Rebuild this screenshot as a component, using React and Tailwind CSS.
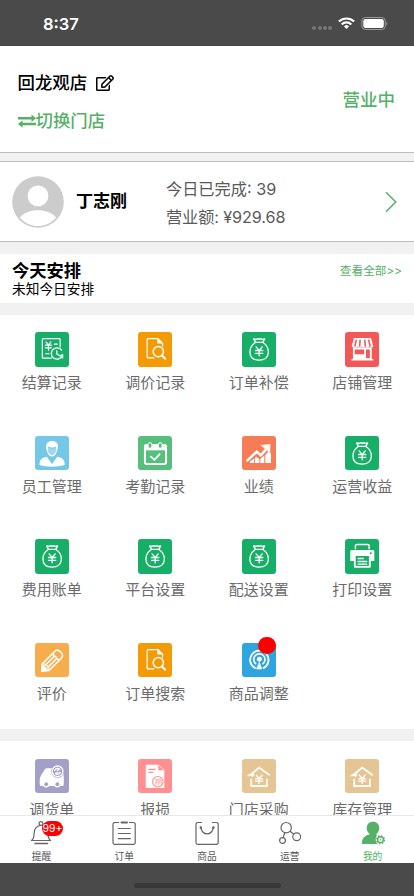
import React from 'react';
import clsx from 'clsx';
import { FaRegEdit } from 'react-icons/fa';

/* ---------- Tile icons, drawn on a 34.5 unit board ---------- */

const Board = ({ children }) => (
  <svg viewBox="0 0 34.5 34.5" className="block h-full w-full" fill="none" stroke="#fff" strokeWidth="1.2" strokeLinecap="round" strokeLinejoin="round">
    {children}
  </svg>
);

const SettleIcon = () => (
  <Board>
    <path d="M16.500 26.2H8.400a1 1 0 0 1-1-1V7.500a1 1 0 0 1 1-1h16a1 1 0 0 1 1 1V15" />
    <path d="M11 9.800l2.600 3 2.600-3M10.500 13h6.200M10.500 15.800h6.200M13.600 13v5.200M19.500 12h3M11 21.700h3" />
    <path d="M26.800 18.200a5.700 5.700 0 1 0 .7 5.500M22 18.800v3.200l2.600 1.600" strokeWidth="1.300" />
    <path d="M24.800 23.500l3.500-1.300-.2 4.200z" fill="#fff" strokeWidth=".5" />
  </Board>
);

const FileSearchIcon = () => (
  <Board>
    <path d="M16 26H10.200a1 1 0 0 1-1-1V7.800a1.300 1.300 0 0 1 1.300-1.300h9.700l4.600 4.500V14" />
    <path d="M19.800 6.800v4.400h4.700z" fill="#fff" strokeWidth=".5" />
    <circle cx="20.500" cy="19.600" r="5.200" strokeWidth="1.500" />
    <path d="M24.200 23.500l3.300 3.300" strokeWidth="2" />
  </Board>
);

const MoneyBagIcon = () => (
  <Board>
    <path d="M13.500 10.400c-3.200 2-5.500 5.800-5.500 9.700 0 5.300 3.700 8.100 9.300 8.100s9.300-2.800 9.300-8.100c0-3.900-2.300-7.700-5.500-9.700z" strokeWidth="1.300" />
    <path d="M13.500 10.200L11.800 6.800l2.800.5 1.300-.7 1.400.7 1.400-.7 1.300.7 2.800-.5-1.700 3.400" strokeWidth="1.500" />
    <path d="M14.200 14.800l3.100 3.600 3.100-3.600M13.600 18.500h7.400M13.600 21.400h7.400M17.300 18.500v5.300" strokeWidth="1.300" />
  </Board>
);

const ShopIcon = () => (
  <Board>
    <path d="M9 6h17.200l2.300 8.200c-.3 1.700-3 1.900-3.700.4-.8 1.500-3.500 1.500-4 0-.8 1.500-3.400 1.500-4 0-.8 1.500-3.500 1.500-4 0-.7 1.500-5 1.500-6-.4z" fill="#fff" stroke="none" />
    <path d="M11.300 8.300L10 14M15.200 8.300L14.800 14M20 8.300l.4 5.700M24 8.300l1.300 5.700" stroke="#f45757" strokeWidth="1.600" />
    <path d="M8 15.500h19v12H8zM6.500 27h22v1.700h-22z" fill="#fff" stroke="none" />
    <path d="M9.800 17.500h9.500v4.800H9.800zM21.200 17.500h3.900v8.500h-3.900z" fill="#f45757" stroke="none" />
  </Board>
);

const StaffIcon = () => (
  <Board>
    <path d="M11.300 12.200C10.500 7 13.500 4.700 17.400 4.800c4.700.1 6.300 3 5.600 7.400-.2 1.500-.6 2.500-1.200 3.800-1.500 6-7.700 6-9.200.5-.7-1.500-1.100-2.500-1.300-4.300z" fill="#fff" stroke="none" />
    <path d="M13.300 11c2.500 1.300 5.300 1.300 7.600.2l.7 1.500c-.2 3-1.700 6.300-4.300 6.300s-3.800-2.600-4.300-4.800z" fill="#9ed8ef" stroke="none" />
    <path d="M13.300 11.200c2.500 1 5.300 1.400 7.600 0" stroke="#74c7e7" strokeWidth="1" />
    <path d="M12 20.700l5.200 7.400 5.200-7.400 3.900 1.200c2.700 1.300 3.700 3.600 3.700 7.200-7.500 2.200-18 2.200-25.500 0 0-3.600 1-5.900 3.700-7.200z" fill="#fff" stroke="none" />
    <path d="M17.200 21.500l-1.500 2 1.500 3 1.500-3z" fill="#74c7e7" stroke="none" />
  </Board>
);

const CalendarIcon = () => (
  <Board>
    <path d="M7 10.300a1.500 1.500 0 0 1 1.500-1.500h18.300a1.500 1.500 0 0 1 1.500 1.500v16.200a1.500 1.500 0 0 1-1.500 1.500H8.500A1.500 1.500 0 0 1 7 26.500z" strokeWidth="2" />
    <path d="M7 9h21.300v5.300H7z" fill="#fff" stroke="none" />
    <rect x="10.200" y="6.500" width="3.800" height="5.700" rx="1.900" fill="#57bf7c" strokeWidth="1" />
    <rect x="20.500" y="6.500" width="3.800" height="5.700" rx="1.900" fill="#57bf7c" strokeWidth="1" />
    <path d="M13 20.700l3.600 3.300 5.300-5.800" strokeWidth="1.800" />
  </Board>
);

const ChartIcon = () => (
  <Board>
    <path d="M8 27v-1.300l4.200-3.200v4.500zM13 27v-5l1.500-1.200 3 2.500V27zM18.500 27v-4l4-3.500V27zM23.500 27v-8l3.300-3.500 2.400 2V27z" fill="#fff" stroke="none" />
    <path d="M5.500 24.500l9.300-8.800 4.200 3.600 6-6.700" strokeWidth="2.600" strokeLinejoin="miter" />
    <path d="M19.300 9.200l9.100-1-.3 8.300z" fill="#fff" strokeWidth=".5" />
  </Board>
);

const PrinterIcon = () => (
  <Board>
    <path d="M10.500 9.700V6.800a1.300 1.300 0 0 1 1.300-1.300h11.300a1.300 1.300 0 0 1 1.300 1.300v2.900" strokeWidth="1.500" />
    <path d="M6.800 11h21.300a1.500 1.500 0 0 1 1.500 1.500v9.500H26v5.800a1 1 0 0 1-1 1H10a1 1 0 0 1-1-1V22H5.300v-9.500A1.500 1.500 0 0 1 6.800 11z" fill="#fff" stroke="none" />
    <path d="M10.800 17h13.300v10H10.800z" fill="#17ae67" stroke="none" />
    <circle cx="26" cy="14.200" r="1.100" fill="#17ae67" stroke="none" />
    <path d="M13.300 19.500h5M13.300 22.500h8.500M13.300 25.200h8.500" strokeWidth="1.500" />
  </Board>
);

const PencilIcon = () => (
  <Board>
    <g transform="translate(6.500 28.500) rotate(-45)">
      <path d="M.3 0L6-4.800h17.500a4 4 0 0 1 4 4v1.600a4 4 0 0 1-4 4H6z" strokeWidth="1.600" />
      <path d="M.3 0L5.500-3.200v6.400z" fill="#fff" strokeWidth="1" />
      <path d="M8.500-1.600h11.500M8.500 1.700h11.500M20.500-4.500v9" strokeWidth="1.500" />
      <path d="M6-4.200c2 1 2 2 1 2.700 1.500.8 1.500 2 0 3 1 .8 1 1.800-1 2.800" />
    </g>
  </Board>
);

const AntennaIcon = () => (
  <Board>
    <path d="M13 25a9.300 9.300 0 1 1 9 0" strokeWidth="1.900" />
    <path d="M13.700 20.700a5.700 5.700 0 1 1 7.600 0" strokeWidth="1.700" />
    <circle cx="17.500" cy="16.300" r="2.500" fill="#fff" stroke="none" />
    <path d="M17.500 19.500l2.600 6.500h-5.200z" fill="#fff" strokeWidth=".6" />
  </Board>
);

const TruckIcon = () => (
  <Board>
    <path d="M5.500 27c-1-1-.8-3-.8-5.500 0-3.500 1.800-6 4.500-10 .8-1.500 1.500-2.200 3-2.200h13l3.500 5.500c.5 3.500.5 7.500.3 10.700 0 1-.5 1.500-1.500 1.500z" fill="#fff" stroke="none" />
    <circle cx="11.300" cy="25.500" r="3" fill="#fff" stroke="none" />
    <circle cx="22.500" cy="25.500" r="3" fill="#fff" stroke="none" />
    <circle cx="11.300" cy="25.200" r="1.900" fill="#a2a0c8" stroke="none" />
    <circle cx="22.500" cy="25.200" r="1.900" fill="#a2a0c8" stroke="none" />
    <circle cx="22.800" cy="12.300" r="6.500" fill="#a2a0c8" stroke="none" />
    <circle cx="22.800" cy="12.300" r="5.400" fill="#a2a0c8" strokeWidth="1.300" />
    <path d="M20 11.300c.8-2.200 3.400-2.700 5-1l-2.700 1M25.600 13.300c-.8 2.200-3.400 2.700-5 1l2.700-1" strokeWidth="1.300" />
  </Board>
);

const LossIcon = () => (
  <Board>
    <path d="M8.700 5.700H21l5.500 5.500v18H8.700a.9.900 0 0 1-.9-.9V6.600a.9.900 0 0 1 .9-.9z" fill="#fff" stroke="none" />
    <path d="M20.500 6v5.300H26z" fill="#ff8f90" stroke="none" />
    <path d="M11 10.300h6.500M11 13.300h4" stroke="#ff8f90" strokeWidth="1.100" />
    <circle cx="20" cy="22.800" r="5.300" fill="#fff" stroke="#ff8f90" strokeWidth="1.100" />
    <path d="M17.200 21h2.500M18.500 19.800v5.600l-.9-.4M17.200 23.500l2.500-.8M20.800 20h2.500v1.500h-2.500zM20.600 25.300v-2.500h2.900v2.500M22 23.500l-1.500 2" stroke="#ff8f90" strokeWidth=".6" />
  </Board>
);

const DepotIcon = () => (
  <Board>
    <path d="M9.800 14.800l7.500-6.300 10.700 7.700" strokeWidth="1.800" strokeLinecap="butt" strokeLinejoin="miter" />
    <path d="M9.300 19.800v7.400h15.800v-7.400" strokeWidth="1.700" strokeLinecap="butt" strokeLinejoin="miter" />
    <path d="M5.800 16.700c1-1.600 2.300-2 4.500-2v-1.500l2 2.600-2 2.400v-1.500z" fill="#fff" strokeWidth=".6" />
    <path d="M14.400 16.200l2.900 3.300 2.900-3.300M13.700 19.800h7.200M13.700 22.200h7.200M17.300 19.800v4.800" strokeWidth="1.300" />
  </Board>
);

/* ---------- Tab bar icons, 24 unit board ---------- */

const TabSvg = ({ children }) => (
  <svg viewBox="0 0 24 24" className="block h-6 w-6" fill="none" stroke="#666" strokeWidth="1.200" strokeLinecap="round" strokeLinejoin="round">
    {children}
  </svg>
);

const BellIcon = () => (
  <TabSvg>
    <circle cx="12" cy="2.500" r="1.900" />
    <path d="M2.500 19.500c2.200-1.800 2.600-4 2.600-7.300C5.100 7.500 8 4.500 12 4.500s6.900 3 6.900 7.700c0 3.300.5 5.500 2.700 7.300z" />
    <path d="M6 22.500h12.500" strokeWidth="1.500" />
  </TabSvg>
);

const OrderIcon = () => (
  <TabSvg>
    <path d="M6.700 1.500H2.800A1.800 1.800 0 0 0 1 3.300v18.300a1.800 1.800 0 0 0 1.800 1.800h18.600a1.800 1.800 0 0 0 1.800-1.800V3.300a1.800 1.800 0 0 0-1.800-1.800h-3.900" />
    <path d="M9.500 1.500h5.500" strokeWidth="2" />
    <path d="M6.300 7.500h12M6.300 12.500h12M6.300 17.700h12" />
  </TabSvg>
);

const GoodsIcon = () => (
  <TabSvg>
    <path d="M6.500 1.500H2.800A1.800 1.800 0 0 0 1 3.300v18.200a1.800 1.800 0 0 0 1.800 1.800h18.600a1.800 1.800 0 0 0 1.800-1.800V3.300a1.800 1.800 0 0 0-1.800-1.800h-3.900" />
    <path d="M5.800 6.500c1 4.300 3.500 6.400 6.300 6.400s5.300-2.100 6.300-6.400" />
    <path d="M5.800 6.500v.1M18.400 6.500v.1" strokeWidth="2.600" />
  </TabSvg>
);

const OperateIcon = () => (
  <TabSvg>
    <circle cx="8.200" cy="6.700" r="5.200" />
    <circle cx="18.700" cy="15.700" r="3.900" />
    <circle cx="4.500" cy="19.500" r="2.900" />
    <path d="M12.100 10.300l3.700 2.900M6.700 11.800l-1.500 4.800" />
  </TabSvg>
);

const MineIcon = () => (
  <TabSvg>
    <path d="M12 .8c3.800 0 6.300 2.700 6.300 6.300 0 2.600-1.300 4.800-3 5.900l.5 1.700c-1.800 2.500-1.500 6 .8 8.300H.8c.2-5.500 2.200-8 7.500-9.500l.3-.6c-1.700-1.100-2.900-3.200-2.900-5.800C5.700 3.500 8.200.8 12 .8z" fill="#55b068" stroke="none" />
    <circle cx="19.500" cy="18.700" r="2.900" stroke="#55b068" strokeWidth="1.400" />
    <circle cx="19.500" cy="18.700" r="3.900" stroke="#55b068" strokeWidth="1.400" strokeDasharray="1.500 1.560" strokeLinecap="butt" />
    <circle cx="19.500" cy="18.700" r=".8" fill="#55b068" stroke="none" />
  </TabSvg>
);

const SwapIcon = () => (
  <svg viewBox="0 0 18 14" className="h-3.5 w-[18px] shrink-0" fill="#55b068">
    <path d="M0 3h13.500V.5L18 4.200l-4.500 3.700V5.400H0zM18 8.800H4.500V6.300L0 10l4.500 3.700v-2.500H18z" />
  </svg>
);

const SERVICES = [
  { label: '结算记录', color: 'bg-[#17ae67]', Icon: SettleIcon },
  { label: '调价记录', color: 'bg-[#f39b05]', Icon: FileSearchIcon },
  { label: '订单补偿', color: 'bg-[#17ae67]', Icon: MoneyBagIcon },
  { label: '店铺管理', color: 'bg-[#f45757]', Icon: ShopIcon },
  { label: '员工管理', color: 'bg-[#74c7e7]', Icon: StaffIcon },
  { label: '考勤记录', color: 'bg-[#57bf7c]', Icon: CalendarIcon },
  { label: '业绩', color: 'bg-[#f67c56]', Icon: ChartIcon },
  { label: '运营收益', color: 'bg-[#17ae67]', Icon: MoneyBagIcon },
  { label: '费用账单', color: 'bg-[#17ae67]', Icon: MoneyBagIcon },
  { label: '平台设置', color: 'bg-[#17ae67]', Icon: MoneyBagIcon },
  { label: '配送设置', color: 'bg-[#17ae67]', Icon: MoneyBagIcon },
  { label: '打印设置', color: 'bg-[#17ae67]', Icon: PrinterIcon },
  { label: '评价', color: 'bg-[#f8ad4c]', Icon: PencilIcon },
  { label: '订单搜索', color: 'bg-[#f39b05]', Icon: FileSearchIcon },
  { label: '商品调整', color: 'bg-[#2ea5df]', Icon: AntennaIcon, dot: true },
];

const STOCK = [
  { label: '调货单', color: 'bg-[#a2a0c8]', Icon: TruckIcon },
  { label: '报损', color: 'bg-[#ff8f90]', Icon: LossIcon },
  { label: '门店采购', color: 'bg-[#e6c594]', Icon: DepotIcon },
  { label: '库存管理', color: 'bg-[#e6c594]', Icon: DepotIcon },
];

const TABS = [
  { label: '提醒', Icon: BellIcon, badge: '99+' },
  { label: '订单', Icon: OrderIcon },
  { label: '商品', Icon: GoodsIcon },
  { label: '运营', Icon: OperateIcon },
  { label: '我的', Icon: MineIcon, active: true },
];

function Tile({ label, color, Icon, dot }) {
  return (
    <div className="flex h-[103.5px] flex-col items-center pt-[17.5px] pr-[0.2px]">
      <div className={clsx('relative h-[34.5px] w-[34.2px] rounded-[3px]', color)}>
        <Icon />
        {dot && <span className="absolute -top-1.5 right-0 h-[17.5px] w-[17.5px] rounded-full bg-[#ff0000]" />}
      </div>
      <span className="mt-[5.500px] text-[15px] leading-[22px] whitespace-nowrap text-[#6b6b6b]">{label}</span>
    </div>
  );
}

function StatusBar() {
  return (
    <div className="flex h-[46px] shrink-0 items-center justify-between bg-[#4a4a4a] pr-[26px] pl-[43px] text-white">
      <span className="pt-0.5 text-[16.5px] leading-none font-semibold">8:37</span>
      <div className="flex items-center">
        <div className="mt-2.5 mr-1.5 flex gap-[1.2px]">
          <span className="size-1 rounded-full bg-[#777]" />
          <span className="size-1 rounded-full bg-[#777]" />
          <span className="size-1 rounded-full bg-[#777]" />
          <span className="size-1 rounded-full bg-[#777]" />
        </div>
        <svg viewBox="0 0 17 12" className="mr-[6px] h-3 w-[17px]" fill="none" stroke="#fff" strokeWidth="2.100">
          <path d="M.9 4.600a10.700 10.700 0 0 1 15.200 0M3.700 7.400a6.800 6.800 0 0 1 9.600 0" />
          <path d="M8.500 11.900l2.500-2.500a3.500 3.500 0 0 0-5 0z" fill="#fff" stroke="none" />
        </svg>
        <svg viewBox="0 0 27 13" className="h-[13px] w-[27px]">
          <rect x=".8" y=".5" width="23.500" height="12" rx="3.500" fill="none" stroke="#999" strokeWidth="1" />
          <rect x="2.300" y="2" width="20.500" height="9" rx="2.200" fill="#fff" />
          <path d="M25.400 4.700v3.700c1.300-.5 1.300-3.200 0-3.700z" fill="#999" />
        </svg>
      </div>
    </div>
  );
}

export default function App() {
  return (
    <div className="flex h-[896px] w-[414px] flex-col overflow-hidden bg-[#f1f1f1] font-[Inter,'Noto_Sans_CJK_SC',sans-serif]">
      <StatusBar />

      {/* Store header */}
      <div className="flex h-[107px] shrink-0 items-center justify-between border-b border-[#bbb] bg-white pr-[19px] pl-[17.5px]">
        <div className="pt-1.5">
          <div className="flex h-[38px] items-center text-[17.4px] font-medium text-black">
            回龙观店
            <FaRegEdit className="mb-0.5 ml-[9px] h-4 w-[18px]" />
          </div>
          <div className="flex h-[37px] items-center text-[17.4px] font-medium text-[#55b068]">
            <SwapIcon />
            切换门店
          </div>
        </div>
        <div className="pt-0.5 text-[17.5px] font-medium text-[#55b068]">营业中</div>
      </div>

      {/* Staff card */}
      <div className="mt-2 flex h-[81px] shrink-0 items-center border-y border-[#bbb] bg-white pr-[17px] pl-3">
        <svg viewBox="0 0 52 52" className="size-[52px]">
          <circle cx="26" cy="26" r="25.800" fill="#ccc" />
          <circle cx="26" cy="19.900" r="10.400" fill="#fff" />
          <path d="M7.800 41.400C16.500 31.800 35.500 31.800 44.200 41.400 34.500 52.800 17.500 52.800 7.800 41.400z" fill="#fff" />
        </svg>
        <span className="ml-3 w-[90px] pt-px text-[17px] font-bold">丁志刚</span>
        <div className="pt-[3px] text-[16.2px] leading-[28.5px] text-[#5a5a5a]">
          <div>今日已完成: 39</div>
          <div className="tracking-[-0.1px]">营业额: ¥929.68</div>
        </div>
        <svg viewBox="0 0 12 22" className="ml-auto h-[22px] w-3" fill="none" stroke="#55b068" strokeWidth="1.500">
          <path d="M1 1.200L10.800 11 1 20.800" />
        </svg>
      </div>

      {/* Today schedule */}
      <div className="mt-3 flex h-[49px] shrink-0 justify-between bg-white px-3">
        <div>
          <div className="mt-[7px] text-[17.3px] leading-5 font-bold">今天安排</div>
          <div className="text-[13.7px] leading-[17px]">未知今日安排</div>
        </div>
        <span className="pt-[8px] text-[11.7px] leading-[18px] text-[#55b068]">查看全部&gt;&gt;</span>
      </div>

      {/* Services */}
      <div className="mt-[11.5px] grid h-[414px] shrink-0 grid-cols-4 content-start bg-white">
        {SERVICES.map((item) => <Tile key={item.label} {...item} />)}
      </div>

      {/* Stock, continues below the tab bar */}
      <div className="mt-[12.500px] grid min-h-0 flex-1 grid-cols-4 content-start overflow-hidden bg-white">
        {STOCK.map((item) => <Tile key={item.label} {...item} />)}
      </div>

      {/* Tab bar */}
      <div className="grid h-12 shrink-0 grid-cols-5 border-t border-[#e8e8e8] bg-white">
        {TABS.map(({ label, Icon, badge, active }) => (
          <div key={label} className="flex flex-col items-center pt-[5px]">
            <div className="relative">
              <Icon />
              {badge && (
                <span className="absolute top-0 left-[12.500px] flex h-[15px] w-[21px] items-center justify-center rounded-full bg-[#ff0000] text-[10.5px] text-white">
                  {badge}
                </span>
              )}
            </div>
            <span className={clsx('mt-[5px] text-[9.700px] leading-[14px]', active ? 'text-[#55b068]' : 'text-[#555]')}>{label}</span>
          </div>
        ))}
      </div>

      {/* Home indicator */}
      <div className="flex h-[33px] shrink-0 justify-center bg-[#4a4a4a] pt-5">
        <div className="h-[5px] w-[147px] rounded-full bg-[#383838]" />
      </div>
    </div>
  );
}
